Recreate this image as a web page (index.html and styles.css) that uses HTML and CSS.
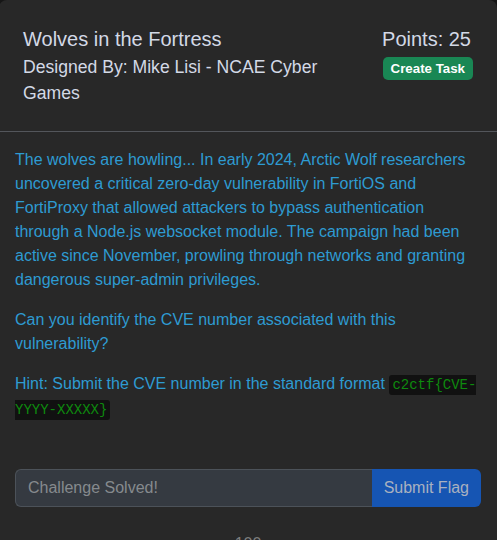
FILE: index.html
```html
<!DOCTYPE html>
<html lang="en">
<head>
<meta charset="utf-8">
<title>Wolves in the Fortress</title>
<link rel="stylesheet" href="styles.css">
</head>
<body>
<div class="modal">
  <div class="modal-header">
    <div class="titles">
      <h5 class="title">Wolves in the Fortress</h5>
      <div class="author">Designed By: Mike Lisi - NCAE Cyber Games</div>
    </div>
    <div class="side">
      <div class="points">Points: 25</div>
      <span class="btn-create">Create Task</span>
    </div>
  </div>
  <div class="modal-body">
    <p>The wolves are howling... In early 2024, Arctic Wolf researchers uncovered a critical zero-day vulnerability in FortiOS and FortiProxy that allowed attackers to bypass authentication through a Node.js websocket module. The campaign had been active since November, prowling through networks and granting dangerous super-admin privileges.</p>
    <p>Can you identify the CVE number associated with this vulnerability?</p>
    <p>Hint: Submit the CVE number in the standard format <code>c2ctf{CVE-YYYY-XXXXX}</code></p>
    <form class="flag-form">
      <input class="flag-input" type="text" placeholder="Challenge Solved!" disabled>
      <button class="flag-btn" type="button" disabled>Submit Flag</button>
    </form>
    <div class="solves">100</div>
  </div>
</div>
</body>
</html>
```

FILE: styles.css
```css
html, body {
  margin: 0;
  padding: 0;
  background: #161616;
}

body {
  font-family: "Liberation Sans", Arial, sans-serif;
  overflow: hidden;
}

.modal {
  margin-left: -1px;
  width: 498px;
  min-height: 543px;
  background: #282828;
  border-radius: 8px;
  box-sizing: border-box;
}

.modal-header {
  display: flex;
  justify-content: space-between;
  align-items: flex-start;
  gap: 16px;
  padding: 27px 24px 25px 24px;
  border-bottom: 1px solid #53565b;
}

.titles {
  flex: 1;
  min-width: 0;
}

.title {
  margin: 0 0 3px;
  font-size: 20px;
  line-height: 24px;
  font-weight: 400;
  color: #d3d9e6;
}

.author {
  font-size: 17.6px;
  line-height: 26px;
  color: #d3d9e6;
}

.side {
  display: flex;
  flex-direction: column;
  align-items: flex-end;
}

.points {
  font-size: 20px;
  line-height: 24px;
  color: #d3d9e6;
  margin-right: 2px;
}

.btn-create {
  margin-top: 6px;
  display: inline-block;
  background: #198754;
  color: #fff;
  font-weight: 700;
  font-size: 13.3px;
  line-height: 19px;
  padding: 2px 8px;
  border-radius: 5px;
}

.modal-body {
  padding: 16px 16px 0 16px;
}

.modal-body p {
  margin: 0 0 16px;
  font-size: 16px;
  line-height: 24px;
  color: #2e9bd2;
}

code {
  font-family: "Liberation Mono", "DejaVu Sans Mono", monospace;
  font-size: 14px;
  color: #0e8a0e;
  background: #111;
  padding: 2px 3px;
  border-radius: 3px;
  -webkit-box-decoration-break: slice;
  box-decoration-break: slice;
}

.flag-form {
  display: flex;
  margin: 47px 0 0;
}

.flag-input {
  flex: 1;
  min-width: 0;
  font-family: inherit;
  font-size: 16px;
  line-height: 24px;
  padding: 6px 12px;
  background: #353a41;
  border: 1px solid #4c5259;
  border-right: none;
  border-radius: 6px 0 0 6px;
  color: #8a8d91;
  margin: 0;
}

.flag-input::placeholder {
  color: #868a8e;
  opacity: 1;
}

.flag-btn {
  font-family: inherit;
  font-size: 16px;
  line-height: 24px;
  padding: 7px 12px;
  background: #1655b3;
  color: #a9b1c0;
  border: none;
  border-radius: 0 6px 6px 0;
  margin: 0;
}

.solves {
  margin-top: 25px;
  text-align: center;
  font-size: 16px;
  line-height: 24px;
  color: #7d7d7d;
}
```
